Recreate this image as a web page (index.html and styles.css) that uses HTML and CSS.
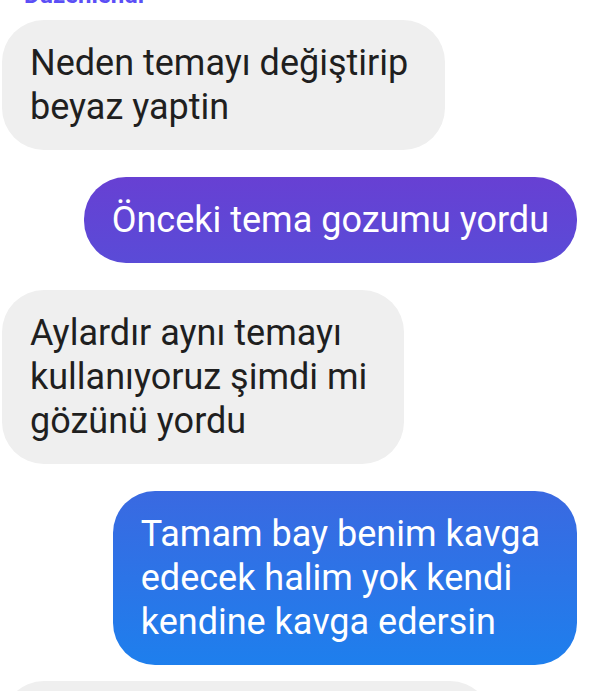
FILE: index.html
```html
<!DOCTYPE html>
<html lang="tr">
<head>
  <meta charset="UTF-8">
  <title>Sohbet</title>
  <meta name="viewport" content="width=device-width, initial-scale=1.0">
  <link rel="stylesheet" href="styles.css">
</head>
<body>
  <div class="thread">
    <div class="edited">Düzenlendi</div>

    <div class="msg in multi">Neden temayı değiştirip<br>beyaz yaptin</div>

    <div class="msg out purple">Önceki tema gozumu yordu</div>

    <div class="msg in multi">Aylardır aynı temayı<br>kullanıyoruz şimdi mi<br>gözünü yordu</div>

    <div class="msg out blue multi">Tamam bay benim kavga<br>edecek halim yok kendi<br>kendine kavga edersin</div>

    <div class="msg in next">&nbsp;</div>
  </div>
</body>
</html>
```

FILE: styles.css
```css
* {
  margin: 0;
  padding: 0;
  box-sizing: border-box;
}

html, body {
  background: #fff;
  height: 100%;
  overflow: hidden;
}

body {
  font-family: Roboto, 'Noto Sans', sans-serif;
  color: #1f1f1f;
}

.thread {
  display: flex;
  flex-direction: column;
  gap: 27px;
  padding: 0 18px 0 2px;
}

.edited {
  margin: -18px 0 -15px 22px;
  font-size: 24px;
  font-weight: bold;
  line-height: 26px;
  color: #5b4ff6;
}

.msg {
  font-size: 36px;
  line-height: 44px;
  padding: 21px 28px;
  border-radius: 42px;
  white-space: nowrap;
}

.multi {
  padding-right: 37px;
}

.in {
  align-self: flex-start;
  background: #efefef;
  color: #1f1f1f;
}

.out {
  align-self: flex-end;
  color: #fff;
}

.purple {
  background: linear-gradient(180deg, #6740d3, #5a4bd7);
}

.blue {
  background: linear-gradient(180deg, #3a69e1, #1e7fed);
}

.next {
  width: 490px;
  margin-top: -11px;
}
```
